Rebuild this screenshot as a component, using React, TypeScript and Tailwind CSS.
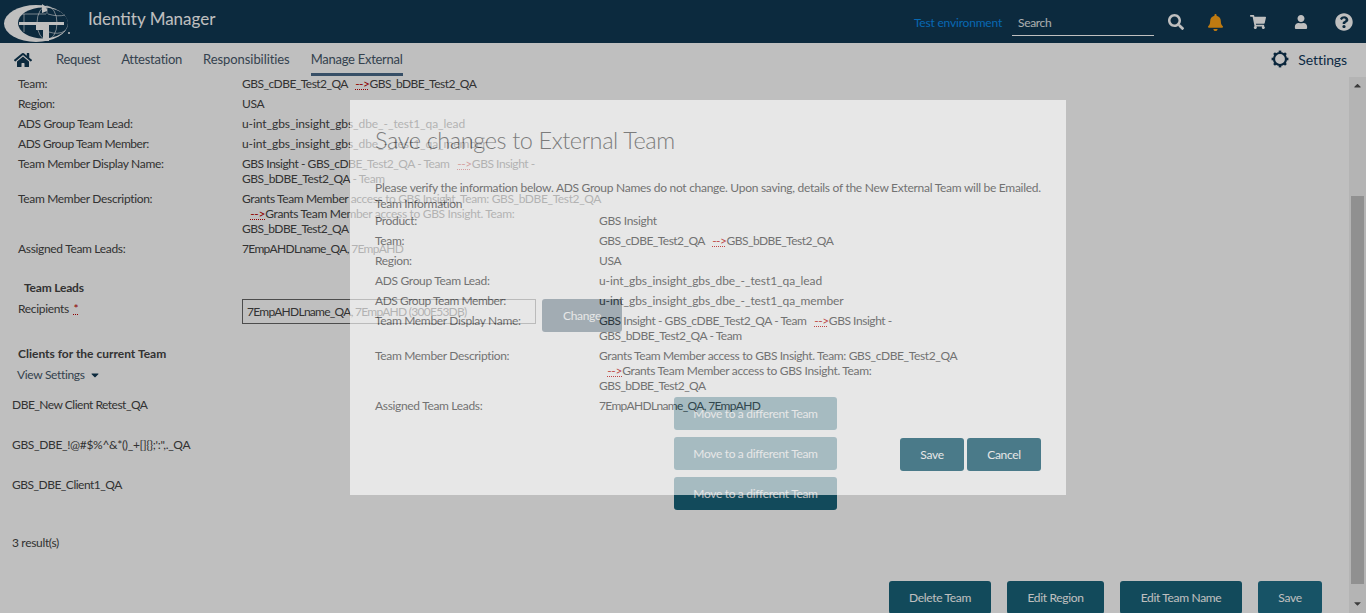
import { FaSearch, FaBell, FaShoppingCart, FaUser, FaQuestionCircle, FaHome, FaCaretDown, FaCaretUp } from "react-icons/fa";

function Arrow() {
  return <span className="underline decoration-dotted decoration-[#c00000] text-[#c00000]">--&gt;</span>;
}

function Logo() {
  return (
    <svg width="68" height="43" viewBox="0 0 68 43" className="shrink-0">
      <ellipse cx="34" cy="23.5" rx="32" ry="18.5" fill="#ffffff" />
      <ellipse cx="41" cy="23" rx="25" ry="15.5" fill="#113853" />
      <g fill="none" stroke="#ffffff" strokeWidth="0.8" strokeOpacity="0.75">
        <ellipse cx="45" cy="23" rx="10" ry="17" />
        <path d="M20 14 H44 M22 14 V32 M46 14 Q56 17 63 15 M47 32 Q56 35 63 31 M45 6 V14" />
      </g>
      <path d="M17 22 H62 V25 H47 V41 H41 V30 H34 V25 H17 Z" fill="#ffffff" />
      <path d="M40 4 Q46 8 45 11 L40 13 Z" fill="#ffffff" />
      <circle cx="67" cy="33" r="1" fill="#ffffff" />
    </svg>
  );
}

function Gear() {
  return (
    <svg width="18" height="18" viewBox="0 0 18 18" className="shrink-0">
      <circle cx="9" cy="9" r="6" fill="none" stroke="#0e3350" strokeWidth="2.2" />
      {[0, 45, 90, 135, 180, 225, 270, 315].map((a) => (
        <rect key={a} x="7.7" y="0.6" width="2.6" height="2.6" fill="#0e3350" transform={`rotate(${a} 9 9)`} />
      ))}
    </svg>
  );
}

function DetailRows({ descTeam }: { descTeam: string }) {
  return (
    <>
      <Row label="Team:"><div className="whitespace-pre tracking-[-0.53px]">GBS_cDBE_Test2_QA{"   "}<Arrow />GBS_bDBE_Test2_QA</div></Row>
      <Row label="Region:">USA</Row>
      <Row label="ADS Group Team Lead:"><div className="tracking-[-0.07px]">u-int_gbs_insight_gbs_dbe_-_test1_qa_lead</div></Row>
      <Row label={<span className="tracking-[-0.46px]">ADS Group Team Member:</span>}><div className="tracking-[-0.07px]">u-int_gbs_insight_gbs_dbe_-_test1_qa_member</div></Row>
      <Row label="Team Member Display Name:">
        <div className="whitespace-pre tracking-[-0.45px]">GBS Insight - GBS_cDBE_Test2_QA - Team{"   "}<Arrow />GBS Insight -</div>
        <div className="tracking-[-0.45px]">GBS_bDBE_Test2_QA - Team</div>
      </Row>
      <Row label="Team Member Description:">
        <div className="tracking-[-0.38px]">Grants Team Member access to GBS Insight. Team: {descTeam}</div>
        <div className="whitespace-pre">{"   "}<Arrow />Grants Team Member access to GBS Insight. Team:</div>
        <div className="tracking-[-0.55px]">GBS_bDBE_Test2_QA</div>
      </Row>
      <Row label="Assigned Team Leads:"><div className="tracking-[-0.66px]">7EmpAHDLname_QA, 7EmpAHD</div></Row>
    </>
  );
}

function Row({ label, children }: { label: React.ReactNode; children: React.ReactNode }) {
  return (
    <div className="flex pb-[5px] leading-[15px]">
      <div className="w-[224px] shrink-0">{label}</div>
      <div className="whitespace-nowrap">{children}</div>
    </div>
  );
}

function Btn({ children, className = "" }: { children: React.ReactNode; className?: string }) {
  return (
    <div className={`h-[33px] flex items-center justify-center rounded-[3px] text-white ${className}`}>
      {children}
    </div>
  );
}

function ClientRow({ name, cls = "" }: { name: string; cls?: string }) {
  return (
    <div className="flex h-[40px]">
      <div className={`w-[662px] shrink-0 leading-[16px] ${cls}`}>{name}</div>
      <Btn className="w-[163px] bg-[#19637a]">Move to a different Team</Btn>
    </div>
  );
}

export default function App() {
  return (
    <div className="relative h-[613px] w-[1366px] overflow-hidden bg-white text-[12px] tracking-[-0.33px] text-[#444] font-['Lato',sans-serif]">
      <header className="flex h-[43px] items-center bg-[#113853] pl-[2px] pr-[13px]">
        <Logo />
        <div className="ml-[18px] -mt-[5px] text-[17px] tracking-[0px] text-white">Identity Manager</div>
        <div className="ml-auto mt-[3px] tracking-[-0.2px] text-[#0a8cec]">Test environment</div>
        <div className="ml-[10px] mt-[1px] flex h-[28px] w-[142px] items-center border-b border-white pl-[6px] pt-[3px] text-[#e4e8ea]">Search</div>
        <FaSearch className="ml-[14px] mt-[1px] text-white" size={16} />
        <FaBell className="ml-[23px] mt-[1px] text-[#ffa316]" size={17} />
        <FaShoppingCart className="ml-[26px] mt-[1px] text-white" size={16} />
        <FaUser className="ml-[28px] mt-[1px] text-white" size={14} />
        <FaQuestionCircle className="ml-[27px] mt-[1px] text-white" size={18} />
      </header>
      <nav className="flex h-[34px] items-center pl-[14px] pr-[19px] text-[13px] tracking-[-0.2px] text-[#47586a]">
        <FaHome className="mr-[24px] text-[#113853]" size={18} />
        <div className="mr-[21px] tracking-[-0.3px]">Request</div>
        <div className="mr-[21px] tracking-[-0.25px]">Attestation</div>
        <div className="mr-[21px] tracking-[-0.07px]">Responsibilities</div>
        <div className="flex h-[33px] items-center self-start border-b-[3px] border-[#4a6a8a] pt-[3px] tracking-[-0.27px]">Manage External</div>
        <div className="ml-auto -mt-[2px] flex items-center gap-[9px] text-[14px] tracking-[-0.1px] text-[#11385a]"><Gear />Settings</div>
      </nav>
      <div className="flex h-[536px]">
        <main className="min-w-0 flex-1 overflow-hidden">
          <div className="-mt-[1px] pl-[18px]">
            <DetailRows descTeam="GBS_bDBE_Test2_QA" />
            <div className="ml-[6px] mt-[19px] font-bold leading-[16px] tracking-[-0.2px]">Team Leads</div>
            <div className="mt-[3px] flex">
              <div className="w-[224px] pt-[2px] leading-[16px]">Recipients <span className="ml-[2px] underline decoration-dotted text-[#c00000]">*</span></div>
              <div className="flex h-[25px] w-[294px] items-center border border-[#666] pl-[4px] whitespace-nowrap tracking-[-0.73px]">7EmpAHDLname_QA, 7EmpAHD (300E53DB)</div>
              <Btn className="ml-[6px] h-[24px] w-[80px] bg-[#0b3048]">Change</Btn>
            </div>
            <div className="mt-[14px] font-bold leading-[16px] tracking-[0px]">Clients for the current Team</div>
            <div className="-ml-[1px] mt-[5px] flex items-center gap-[4px] leading-[16px] text-[#47586a]">View Settings <FaCaretDown size={12} className="text-[#113853]" /></div>
          </div>
          <div className="mt-[14px] pl-[12px]">
            <ClientRow name="DBE_New Client Retest_QA" cls="tracking-[-0.5px]" />
            <ClientRow name={"GBS_DBE_!@#$%^&*()_+[]{};':\",._QA"} />
            <ClientRow name="GBS_DBE_Client1_QA" cls="tracking-[-0.5px]" />
            <div className="mt-[18px] leading-[16px]">3 result(s)</div>
          </div>
          <div className="mt-[30px] flex justify-end gap-[16px] pr-[27px]">
            <Btn className="w-[102px] bg-[#19637a]">Delete Team</Btn>
            <Btn className="w-[97px] bg-[#19637a]">Edit Region</Btn>
            <Btn className="w-[122px] bg-[#19637a]">Edit Team Name</Btn>
            <Btn className="w-[64px] bg-[#1f6f88]">Save</Btn>
          </div>
        </main>
        <div className="flex w-[17px] shrink-0 flex-col items-center bg-[#f1f1f1] text-[#505050]">
          <FaCaretUp size={11} className="mt-[3px] h-[11px]" />
          <div className="mt-[105px] h-[388px] w-[13px] bg-[#c1c1c1]" />
          <FaCaretDown size={11} className="mt-[14px]" />
        </div>
      </div>
      <div className="absolute inset-0 bg-black/25" />
      <div className="absolute left-[350px] top-[100px] flex h-[395px] w-[716px] flex-col bg-white px-[25px] opacity-[0.625]">
        <div className="mt-[25px] text-[23.5px] font-light leading-[30px] tracking-[-0.41px] text-[#555]">Save changes to External Team</div>
        <div className="mt-[25px] whitespace-nowrap leading-[16px] tracking-[-0.28px]">Please verify the information below. ADS Group Names do not change. Upon saving, details of the New External Team will be Emailed.</div>
        <div className="leading-[16px]">Team Information</div>
        <div className="mt-[1px]">
          <Row label="Product:">GBS Insight</Row>
          <DetailRows descTeam="GBS_cDBE_Test2_QA" />
        </div>
        <div className="mt-[20px] flex justify-end gap-[3px]">
          <Btn className="h-[32px] w-[64px] bg-[#04526a]">Save</Btn>
          <Btn className="h-[32px] w-[74px] bg-[#04526a]">Cancel</Btn>
        </div>
      </div>
    </div>
  );
}
